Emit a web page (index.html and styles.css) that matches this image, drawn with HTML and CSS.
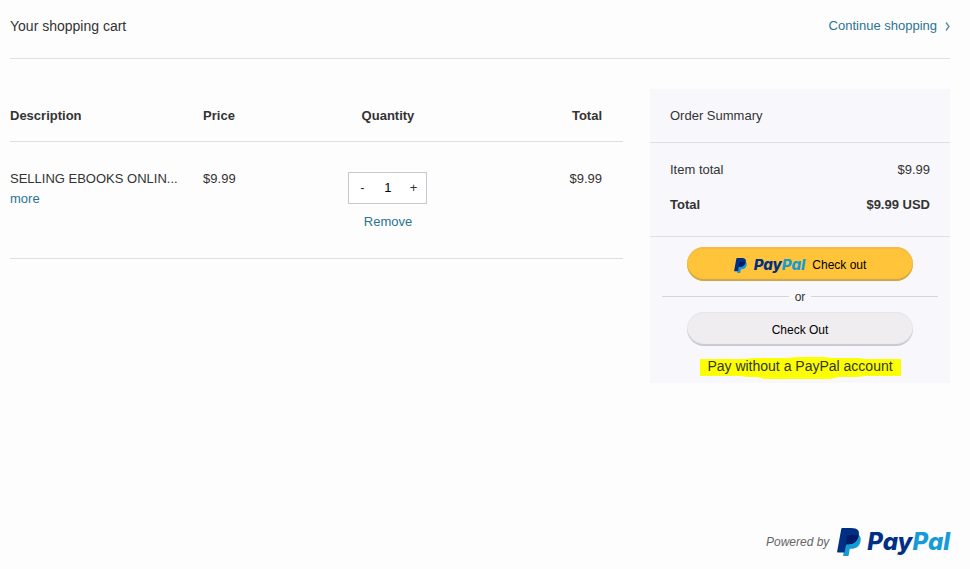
FILE: index.html
```html
<!DOCTYPE html>
<html lang="en">
<head>
<meta charset="utf-8">
<meta name="viewport" content="width=device-width, initial-scale=1">
<title>Your shopping cart</title>
<link rel="stylesheet" href="styles.css">
</head>
<body>
<svg width="0" height="0" class="defs" aria-hidden="true">
  <symbol id="pp-mark" viewBox="0 0 24 28">
    <path fill="#179bd7" d="M10.500 6h10c3 1.500 3.600 4.200 3 7.500-1.100 5-4.400 7.300-9.100 7.300h-.8c-.5 0-.9.400-1 .9l-.9 5.500c-.1.500-.4.800-.9.800H6.600c-.4 0-.6-.3-.5-.7z"/>
    <path fill="#002f86" d="M4.200 1.200C4.300.5 4.800 0 5.500 0h8.700c3.100 0 5.600.7 6.800 2.300 1.100 1.400 1.200 3.200.7 5.300-1.200 5.900-4.700 8.700-10 8.700h-1.500c-.7 0-1.200.4-1.300 1.100L7.500 24.500H.7c-.4 0-.7-.3-.6-.8z"/>
    <path fill="#001c64" d="M9.900 8.300c.1-.8.600-1.200 1.300-1.200h6.900c1.500 0 2.600.1 3.600.5-1.200 5.900-4.700 8.700-10 8.700h-1.500c-.7 0-1.200.4-1.300 1.100z"/>
  </symbol>
</svg>
<div class="page">
  <header class="top">
    <h1>Your shopping cart</h1>
    <a class="continue" href="#">Continue shopping
      <svg width="5" height="9" viewBox="0 0 5 9" aria-hidden="true"><path d="M1 .5 4 4.500 1 8.500" fill="none" stroke="#5c8797" stroke-width="1.300"/></svg>
    </a>
  </header>
  <main class="cart">
    <table class="items">
      <thead>
        <tr><th class="desc">Description</th><th class="price">Price</th><th class="qty">Quantity</th><th class="total">Total</th></tr>
      </thead>
      <tbody>
        <tr>
          <td class="desc">SELLING EBOOKS ONLIN...<br><a href="#">more</a></td>
          <td class="price">$9.99</td>
          <td class="qty">
            <div class="stepper">
              <button type="button" aria-label="Decrease quantity">-</button>
              <input type="text" value="1" aria-label="Quantity">
              <button type="button" aria-label="Increase quantity">+</button>
            </div>
            <a href="#">Remove</a>
          </td>
          <td class="total">$9.99</td>
        </tr>
      </tbody>
    </table>
    <aside class="summary">
      <h2>Order Summary</h2>
      <dl>
        <div><dt>Item total</dt><dd>$9.99</dd></div>
        <div class="grand"><dt>Total</dt><dd>$9.99 USD</dd></div>
      </dl>
      <div class="actions">
        <button type="button" class="pill gold">
          <svg class="mark" aria-hidden="true"><use href="#pp-mark"/></svg>
          <span class="wordmark">Pay<span>Pal</span></span>
          <span>Check out</span>
        </button>
        <div class="or">or</div>
        <button type="button" class="pill grey">Check Out</button>
        <div class="guest">
          <svg viewBox="0 0 201 23" preserveAspectRatio="none" aria-hidden="true"><path fill="#fbff00" d="M0 3h44l10-1h34l8-1h28l8 1h26l8 1h35v17h-36l-8 1h-18l-9 2H64l-6-2H48l-8-1H0z"/></svg>
          <a href="#">Pay without a PayPal account</a>
        </div>
      </div>
    </aside>
  </main>
  <footer>
    <em>Powered by</em>
    <svg class="mark" aria-hidden="true"><use href="#pp-mark"/></svg>
    <span class="wordmark">Pay<span>Pal</span></span>
  </footer>
</div>
</body>
</html>
```
FILE: styles.css
```css
* { box-sizing: border-box; }

body {
  margin: 0;
  background: #fdfdfd;
  color: #333;
  font: 13px/20px "Liberation Sans", Arial, sans-serif;
}

a { color: #2b7393; text-decoration: none; }

button, input { font: inherit; }

button { cursor: pointer; }

.defs { position: absolute; }

.page {
  display: flex;
  flex-direction: column;
  min-height: 100vh;
  padding: 0 20px 0 10px;
}

.top {
  display: flex;
  align-items: center;
  justify-content: space-between;
  padding: 16px 0 22px;
  border-bottom: 1px solid #e0e0e0;
}

h1 {
  margin: 0;
  font-size: 14px;
  font-weight: 400;
}

.continue { display: flex; align-items: center; gap: 8px; }

.cart {
  display: grid;
  grid-template-columns: 1fr 300px;
  gap: 27px;
  align-items: start;
  padding-top: 30px;
}

.items {
  width: 100%;
  table-layout: fixed;
  border-collapse: separate;
  border-spacing: 0;
}

.items th, .items td {
  padding: 0;
  text-align: left;
  vertical-align: top;
  border-bottom: 1px solid #dedede;
}

.items th { padding: 17px 0 15px; }
.items td { padding: 27px 0 26px; }
.items .desc { width: 31.5%; white-space: nowrap; }
.items .price { width: 17.5%; }
.items .qty { width: 25%; padding-left: 2px; text-align: center; }
.items td.qty { padding-top: 30px; }
.items .total { text-align: right; padding-right: 21px; }

.stepper {
  display: flex;
  width: 79px;
  height: 32px;
  margin: 0 auto 8px;
  background: #fff;
  border: 1px solid #cbc7d0;
}

.stepper button {
  width: 26px;
  padding: 0;
  border: 0;
  background: none;
  color: #333;
}

.stepper input {
  flex: 1;
  min-width: 0;
  padding: 0;
  border: 0;
  background: none;
  color: #000;
  text-align: center;
}

.summary { background: #f8f8fc; }

h2 {
  margin: 0;
  padding: 17px 20px 16px;
  font-size: 13px;
  font-weight: 400;
  border-bottom: 1px solid #dedfe4;
}

dl {
  display: grid;
  gap: 15px;
  margin: 0;
  padding: 17px 20px 21px;
  border-bottom: 1px solid #dedfe4;
}

dl div { display: flex; justify-content: space-between; }
dd { margin: 0; }
.grand { font-weight: 700; }

.actions {
  display: flex;
  flex-direction: column;
  align-items: center;
  padding: 10px 12px 4px;
}

.pill {
  display: flex;
  align-items: center;
  justify-content: center;
  width: 226px;
  height: 34px;
  padding: 2px 0 0;
  border: 0;
  border-radius: 17px;
  color: #000;
  font-size: 12px;
}

.gold {
  gap: 7px;
  background: #ffc439;
  box-shadow: inset 0 2px 1px #f5ba49, inset 0 -2px 1px #cfa54e;
}

.grey {
  background: #efedf0;
  box-shadow: inset 0 1px 1px #e4e3e7, inset 0 -2px 1px #c9c8cd;
}

.wordmark {
  color: #002f86;
  font: italic 800 15px/20px Inter, "Open Sans", sans-serif;
}

.wordmark span { color: #179bd7; }

.gold .mark { width: 13px; height: 15px; }

.or {
  display: flex;
  align-items: center;
  gap: 6px;
  align-self: stretch;
  height: 31px;
  font-size: 12px;
}

.or::before, .or::after {
  content: "";
  flex: 1;
  border-top: 1px solid #d5d5da;
}

.guest {
  position: relative;
  margin-top: 10px;
  width: 201px;
  height: 23px;
  line-height: 20px;
  text-align: center;
  font-size: 14px;
}

.guest svg { position: absolute; inset: 0; width: 100%; height: 100%; }
.guest a { position: relative; color: #333; white-space: nowrap; }

footer {
  display: flex;
  align-items: center;
  justify-content: flex-end;
  margin-top: auto;
  padding-bottom: 13px;
}

footer em { margin-right: 8px; font-size: 12px; color: #666; }
footer .mark { width: 24px; height: 28px; margin-right: 6px; }
footer .wordmark { font-size: 24px; line-height: 28px; }
```
